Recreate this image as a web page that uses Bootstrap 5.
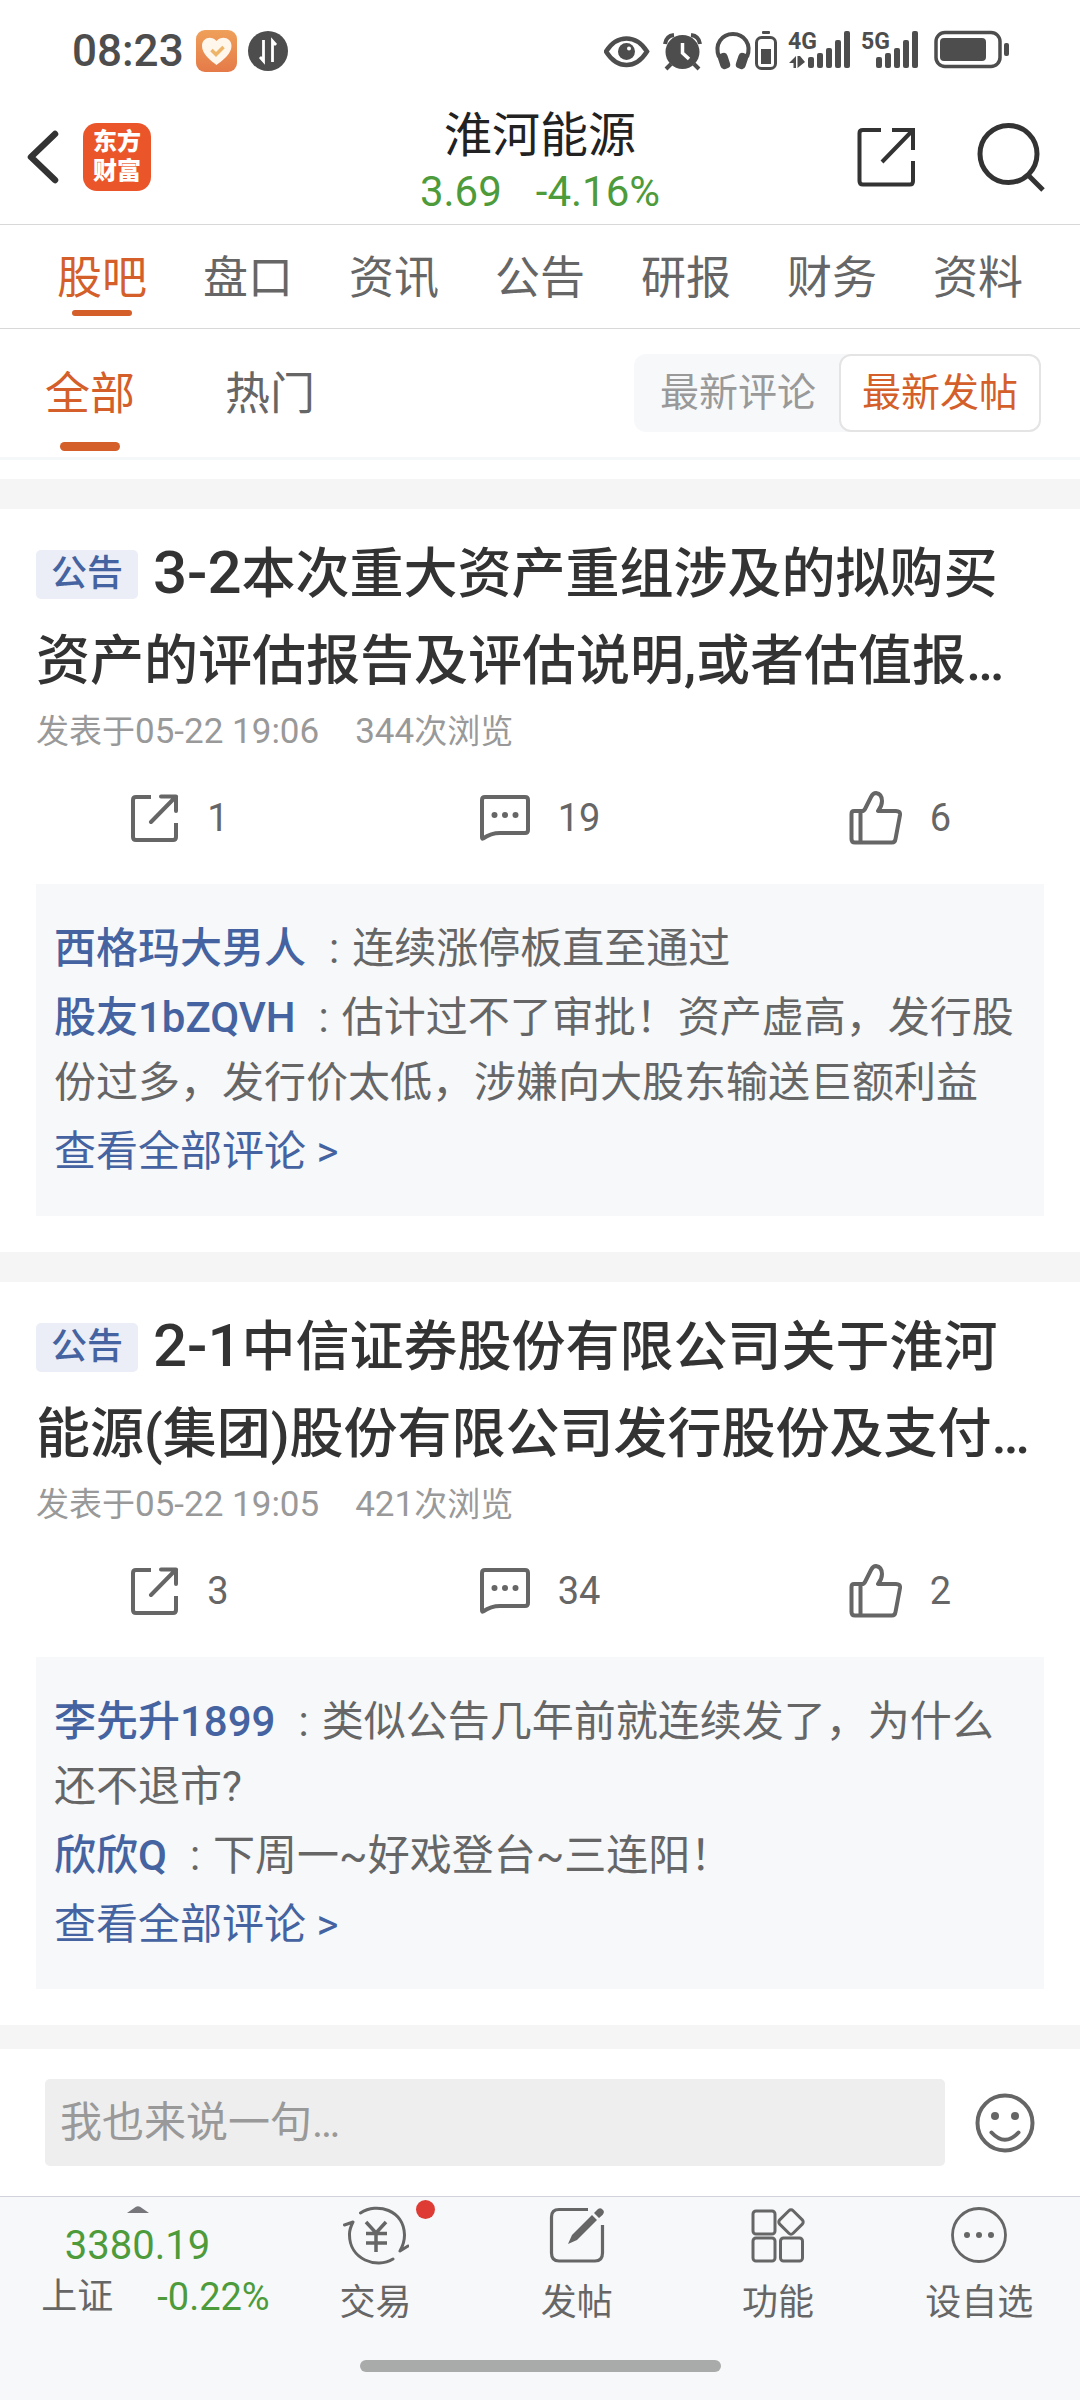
<!DOCTYPE html>
<html lang="zh-CN">
<head>
<meta charset="utf-8">
<meta name="viewport" content="width=device-width, initial-scale=1">
<title>淮河能源 - 股吧</title>
<link href="https://cdn.jsdelivr.net/npm/bootstrap@5.3.0/dist/css/bootstrap.min.css" rel="stylesheet">
<style>
:root{--ink:#333;--soft:#666;--faint:#999;--accent:#d45f2a;--fall:#4d9b3a;--blue:#4463a0;--panel:#f6f8fa}
body{font-family:Roboto,"Noto Sans CJK SC",sans-serif;color:var(--ink);background:#fff}
a{color:inherit;text-decoration:none}
button{border:0;background:none;padding:0;color:inherit}
svg{display:block;flex:none}
.ln{fill:none;stroke:currentColor}
.status{height:90px;padding:12px 71px 0 72px;color:#4d4d4d}
.clock{font-size:44px;font-weight:500;line-height:48px;margin-right:12px}
.topbar{height:135px;display:grid;grid-template-columns:1fr auto 1fr;border-bottom:1px solid #d8d8d8;padding:0 35px}
.back{margin-left:-8px}
.find{margin-left:61px}
.logo{width:68px;height:68px;border-radius:14px;background:#ea552a;color:#fff;font-size:24px;line-height:29px;font-weight:900;text-align:center;padding:5px 10px}
.stock{padding-top:12px}
.stock h1{font-size:48px;line-height:58px;font-weight:400;color:#222;margin:0}
.quote{font-size:42px;line-height:54px;color:var(--fall);gap:34px}
.tabs{height:104px;border-bottom:1px solid #d8d8d8;padding:0 29px;font-size:45px;color:var(--soft)}
.tabs a,.subtabs a{display:flex;flex-direction:column;align-items:center}
.tabs a{flex:1;line-height:62px;padding-top:23px;height:91px;justify-content:space-between}
.tabs a.on::after,.subtabs a.on::after{content:"";width:60px;height:6px;border-radius:3px;background:var(--accent)}
.on{color:var(--accent)}
.filterbar{height:131px;border-bottom:3px solid #f5f8f9;padding:0 39px 0 45px;margin-bottom:19px}
.subtabs{gap:90px;font-size:45px;color:var(--soft)}
.subtabs a{line-height:66px;height:122px;padding-top:33px;justify-content:space-between}
.subtabs a.on::after{height:9px;border-radius:5px}
.seg{margin-top:25px;height:78px;padding-left:3px;background:#f7f8fa;border-radius:12px;font-size:39px;color:var(--faint)}
.seg button{padding:0 21px;height:78px;border-radius:12px;border:2px solid transparent}
.seg button.on{background:#fff;border-color:#e4e4e4;color:var(--accent)}
.band{height:30px;background:#f5f5f5}
.band-thin{height:24px}
.post{padding:22px 36px 36px}
.post h2{font-size:54px;line-height:87px;font-weight:500;margin:0;color:var(--ink)}
.num{font-size:60px;line-height:1}
.tag{display:inline-block;vertical-align:7px;background:#ebeef7;color:var(--blue);font-size:36px;line-height:49px;height:49px;padding:0 15px;border-radius:5px;margin-right:15px}
.meta{font-size:35px;line-height:54px;color:var(--faint);gap:36px}
.cj{font-size:33px}
.acts{margin:34px -36px 41px;height:50px;color:var(--soft);font-size:38px}
.acts button{flex:1;gap:28px}
.talk{background:var(--panel);padding:32px 18px;font-size:42px;line-height:65px;color:var(--soft)}
.talk p{margin:0 0 4px}
.talk b{font-weight:500;color:var(--blue)}
.talk i{font-style:normal;margin:0 13px 0 23px}
.talk .all{color:var(--blue);display:block}
.sayrow{padding:30px 45px;gap:30px;color:var(--soft)}
.say{flex:1;min-width:0;height:87px;border:0;border-radius:5px;background:#eee;font-size:42px;padding:0 15px;color:var(--soft)}
.say::placeholder{color:var(--faint);opacity:1}
.dock{background:#f7f8fa;border-top:1px solid #d2d2da;flex:1;color:var(--soft)}
.index{width:275px;padding-top:9px}
.index .pts{font-size:40px;line-height:44px;color:var(--fall);margin-top:11px}
.index .chg{font-size:36px;line-height:46px;gap:44px;margin-top:6px;padding-left:36px}
.index .pct{font-size:38px;color:var(--fall)}
.dock a{font-size:36px;line-height:50px;padding-top:8px;flex:1}
.dock a svg{margin-bottom:13px}
.dot{width:19px;height:19px;border-radius:50%;background:#dd3b34;position:absolute;left:calc(50% + 40px);top:3px}
.homebar{width:361px;height:12px;border-radius:6px;background:#a9abaa;margin:32px auto 27px}
</style>
<script src="https://cdn.jsdelivr.net/npm/bootstrap@5.3.0/dist/js/bootstrap.bundle.min.js"></script>
</head>
<body>
<svg width="0" height="0" class="position-absolute" aria-hidden="true">
<defs>
<symbol id="share" viewBox="0 0 48 48"><path class="ln" stroke-width="4" stroke-linecap="butt" d="M20 3H5Q2 3 2 6V43Q2 46 5 46H42Q45 46 45 43V29"/><path class="ln" stroke-width="4" stroke-linecap="round" stroke-linejoin="round" d="M30 2.500H45V17M45 2.500L20 28"/></symbol>
<symbol id="chat" viewBox="0 0 50 46"><path class="ln" stroke-width="4" stroke-linejoin="round" d="M5 2H45Q48 2 48 5V35Q48 38 45 38H20Q11 38 3 43.500Q2 44 2 42V5Q2 2 5 2Z"/><circle cx="14.500" cy="20" r="3"/><circle cx="25" cy="20" r="3"/><circle cx="35.500" cy="20" r="3"/></symbol>
<symbol id="thumb" viewBox="0 0 53 54"><path class="ln" stroke-width="4" stroke-linejoin="round" d="M5 20H13Q15 20 16 18L22 6Q24 2 27 2Q33 3 33 10Q33 15 29 20H47Q51.500 20 51 24L46.500 48Q46 51.500 43 51.500H6Q2.500 51.500 2.500 48V23Q2.500 20 5 20ZM11.500 20V51"/></symbol>
</defs>
</svg>
<div class="d-flex flex-column min-vh-100">

<div class="status d-flex align-items-center">
  <span class="clock">08:23</span>
  <svg width="41" height="42" viewBox="0 0 41 42"><defs><linearGradient id="og" x2="0" y2="1"><stop stop-color="#efa05a"/><stop offset="1" stop-color="#e57a48"/></linearGradient></defs><rect width="41" height="42" rx="9" fill="url(#og)"/><path d="M20.500 35C15 31 6 24 6 16C6 8 15 5 20.500 11C26 5 35.500 8 35.500 16C35.500 24 26 31 20.500 35Z" fill="#fff6ec"/><path d="M15.500 20L20 24.500L27.500 17" fill="none" stroke="#eeb468" stroke-width="3.500"/></svg>
  <svg class="ms-2 me-auto" width="44" height="42" viewBox="0 0 44 42"><circle cx="23" cy="21" r="20" fill="#4d4d4d"/><path d="M18.500 10V31L15 27M27.500 32V11L31 15" fill="none" stroke="#fff" stroke-width="2.800"/></svg>
  <svg width="405" height="54" viewBox="604 25 405 54" fill="#4d4d4d">
    <path class="ln" stroke-width="4.500" d="M606 52.500C612 43 620 39.500 626.500 39.500S641 43 647 52.500C641 62 633 66 626.500 66S612 62 606 52.500Z"/><circle cx="626.500" cy="52.500" r="8.500"/><circle cx="629" cy="49.500" r="2" fill="#fff"/>
    <circle cx="682.500" cy="53" r="17"/><path class="ln" stroke-width="4" d="M665 45Q666 37 674 36M700 45Q699 37 691 36M671 65L666 70M694 65L699 70"/><path d="M682.500 44V54L689 60" fill="none" stroke="#fff" stroke-width="3.500"/>
    <path class="ln" stroke-width="4" d="M719 58C714 45 722 35 733 35S752 45 747 58"/><rect x="719" y="54" width="10" height="16" rx="4" transform="rotate(-18 724 62)"/><rect x="737" y="54" width="10" height="16" rx="4" transform="rotate(18 742 62)"/>
    <rect class="ln" stroke-width="3" x="756.500" y="38.500" width="19" height="31" rx="5"/><rect x="762" y="32" width="8" height="3" rx="1"/><rect x="761" y="50" width="10" height="15"/>
    <text x="788" y="50" font-size="23" font-weight="700">4G</text><text x="861" y="50" font-size="23" font-weight="700">5G</text>
    <path d="M789 64L796 57V69H793.500V64ZM797.500 57H800L805 63L797.500 69Z"/>
    <g id="bars"><rect x="808" y="58" width="6" height="11" rx="2"/><rect x="817" y="54" width="6" height="15" rx="2"/><rect x="826" y="49" width="6" height="20" rx="2"/><rect x="835" y="41" width="6" height="28" rx="2"/><rect x="844" y="32" width="6" height="37" rx="2"/></g>
    <use href="#bars" x="68"/>
    <rect class="ln" stroke-width="3.500" x="936" y="33.500" width="64" height="34" rx="9"/><rect x="940" y="39" width="46" height="23" rx="4"/><rect x="1004" y="44" width="5" height="13" rx="2"/>
  </svg>
</div>

<header class="topbar align-items-center">
  <div class="d-flex align-items-center">
    <button type="button" aria-label="返回" class="back me-4"><svg width="32" height="54" viewBox="0 0 32 54"><path class="ln" stroke-width="6.500" stroke-linecap="round" stroke-linejoin="round" d="M28 4L4 27L28 50"/></svg></button>
    <div class="logo">东方财富</div>
  </div>
  <div class="stock text-center">
    <h1>淮河能源</h1>
    <div class="quote d-flex justify-content-center"><span>3.69</span><span>-4.16%</span></div>
  </div>
  <div class="d-flex align-items-center justify-content-end">
    <button type="button" aria-label="分享"><svg width="59" height="60" viewBox="0 0 59 60"><path class="ln" stroke-width="4" d="M24 3H6Q2.500 3 2.500 6V54Q2.500 57.500 6 57.500H53Q56 57.500 56 54V34M35 3H56V23M56 3L25 35"/></svg></button>
    <button type="button" aria-label="搜索" class="find"><svg width="68" height="70" viewBox="0 0 68 70"><circle class="ln" stroke-width="5" cx="31.500" cy="32" r="28.500"/><path class="ln" stroke-width="5" d="M51 53L66 68"/></svg></button>
  </div>
</header>

<nav class="tabs d-flex">
  <a href="#" class="on">股吧</a><a href="#">盘口</a><a href="#">资讯</a><a href="#">公告</a><a href="#">研报</a><a href="#">财务</a><a href="#">资料</a>
</nav>

<div class="filterbar d-flex justify-content-between align-items-start">
  <nav class="subtabs d-flex"><a href="#" class="on">全部</a><a href="#">热门</a></nav>
  <div class="seg d-flex"><button type="button">最新评论</button><button type="button" class="on">最新发帖</button></div>
</div>

<main>
<div class="band"></div>
<article class="post">
  <h2><span class="tag">公告</span><span class="num">3-2</span>本次重大资产重组涉及的拟购买资产的评估报告及评估说明,或者估值报…</h2>
  <div class="meta d-flex"><span><span class="cj">发表于</span>05-22 19:06</span><span>344<span class="cj">次浏览</span></span></div>
  <div class="acts d-flex">
    <button type="button" class="d-flex align-items-center justify-content-center"><svg width="48" height="48"><use href="#share"/></svg>1</button>
    <button type="button" class="d-flex align-items-center justify-content-center"><svg width="50" height="46" fill="currentColor"><use href="#chat"/></svg>19</button>
    <button type="button" class="d-flex align-items-center justify-content-center"><svg width="53" height="54"><use href="#thumb"/></svg>6</button>
  </div>
  <div class="talk">
    <p><b>西格玛大男人</b><i>:</i>连续涨停板直至通过</p>
    <p><b>股友1bZQVH</b><i>:</i>估计过不了审批！资产虚高，发行股份过多，发行价太低，涉嫌向大股东输送巨额利益</p>
    <a href="#" class="all">查看全部评论 &gt;</a>
  </div>
</article>
<div class="band"></div>
<article class="post">
  <h2><span class="tag">公告</span><span class="num">2-1</span>中信证券股份有限公司关于淮河能源(集团)股份有限公司发行股份及支付…</h2>
  <div class="meta d-flex"><span><span class="cj">发表于</span>05-22 19:05</span><span>421<span class="cj">次浏览</span></span></div>
  <div class="acts d-flex">
    <button type="button" class="d-flex align-items-center justify-content-center"><svg width="48" height="48"><use href="#share"/></svg>3</button>
    <button type="button" class="d-flex align-items-center justify-content-center"><svg width="50" height="46" fill="currentColor"><use href="#chat"/></svg>34</button>
    <button type="button" class="d-flex align-items-center justify-content-center"><svg width="53" height="54"><use href="#thumb"/></svg>2</button>
  </div>
  <div class="talk">
    <p><b>李先升1899</b><i>:</i>类似公告几年前就连续发了，为什么还不退市?</p>
    <p><b>欣欣Q</b><i>:</i>下周一~好戏登台~三连阳！</p>
    <a href="#" class="all">查看全部评论 &gt;</a>
  </div>
</article>
<div class="band band-thin"></div>
</main>

<form class="sayrow d-flex align-items-center">
  <input type="text" class="say" placeholder="我也来说一句…" aria-label="我也来说一句">
  <button type="button" aria-label="表情"><svg width="60" height="60" viewBox="0 0 60 60"><circle class="ln" stroke-width="4" cx="30" cy="30" r="27.500"/><circle cx="20" cy="23" r="4" fill="currentColor"/><circle cx="40" cy="23" r="4" fill="currentColor"/><path class="ln" stroke-width="4" stroke-linecap="round" d="M16.500 39.500Q30 54 43.500 39.500"/></svg></button>
</form>

<footer class="dock">
  <div class="d-flex">
    <div class="index d-flex flex-column align-items-center">
      <svg width="22" height="7" viewBox="0 0 22 7"><path d="M0 7L9 .800Q11 -.500 13 .800L22 7Z" fill="#77777b"/></svg>
      <div class="pts">3380.19</div>
      <div class="chg d-flex"><span>上证</span><span class="pct">-0.22%</span></div>
    </div>
    <a href="#" class="d-flex flex-column align-items-center position-relative"><svg width="66" height="60" viewBox="0 0 66 60"><path class="ln" stroke-width="3" stroke-linecap="round" stroke-linejoin="round" d="M17.500 8C34 -3 61 5 61.500 30Q61.500 38 57 46L65 41M50 54C34 64 6 55 6.500 29Q6.500 24 10 17L1.500 20"/><path class="ln" stroke-width="3.500" d="M23 17L33 28L43 17M33 28V47M23 28.500H44M23 38H44"/></svg>交易<span class="dot"></span></a>
    <a href="#" class="d-flex flex-column align-items-center"><svg width="56" height="60" viewBox="0 0 56 60"><path class="ln" stroke-width="3.200" d="M39 4.500H10Q2.500 4.500 2.500 12V48Q2.500 56 10 56H46Q53.500 56 53.500 48V20"/><path fill="currentColor" d="M19 39L23 30L43 10L48 15L28 35ZM45 8L49 4Q52 2 54 5Q56 7 53.500 10L50 13Z"/></svg>发帖</a>
    <a href="#" class="d-flex flex-column align-items-center"><svg width="54" height="60" viewBox="0 0 54 60"><g class="ln" stroke-width="3"><rect x="2" y="6" width="22" height="23" rx="3"/><rect x="2" y="33" width="22" height="23" rx="3"/><rect x="29.500" y="33" width="22" height="23" rx="3"/><rect x="30.500" y="7.500" width="19" height="19" rx="3" transform="rotate(45 40 17)"/></g></svg>功能</a>
    <a href="#" class="d-flex flex-column align-items-center"><svg width="58" height="60" viewBox="0 0 58 60"><circle class="ln" stroke-width="2.800" cx="29" cy="30" r="26.500"/><g fill="currentColor"><circle cx="17" cy="30" r="3"/><circle cx="29" cy="30" r="3"/><circle cx="41" cy="30" r="3"/></g></svg>设自选</a>
  </div>
  <div class="homebar"></div>
</footer>
</div>
</body>
</html>
